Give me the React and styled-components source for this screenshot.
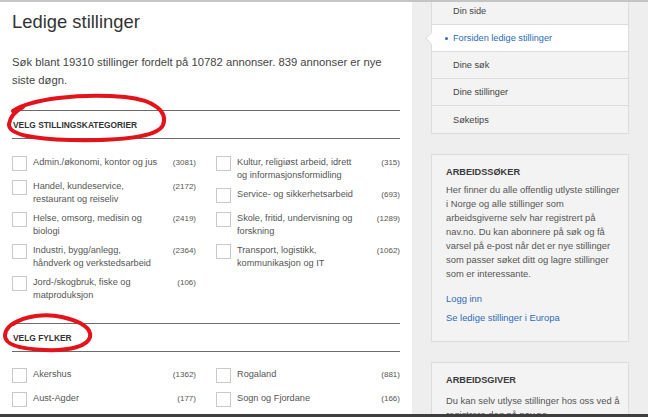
import styled, { createGlobalStyle } from "styled-components";

const GlobalStyle = createGlobalStyle`
  html, body {
    margin: 0;
    padding: 0;
    overflow: hidden;
  }
  body {
    font-family: "Liberation Sans", Arial, sans-serif;
    color: #444;
  }
`;

const Page = styled.div`
  position: relative;
  width: 648px;
  height: 417px;
  box-sizing: border-box;
  border-top: 2px solid #c4c4c4;
  display: flex;
  flex-direction: column;
`;

const Body = styled.div`
  flex: 1;
  min-height: 0;
  display: flex;
  overflow: hidden;
`;

const BottomBar = styled.div`
  height: 3px;
  background: #3e3e3e;
`;

const Main = styled.main`
  width: 412px;
  flex: none;
  box-sizing: border-box;
  background: #fff;
  padding: 8px 12px 0 12px;
`;

const Sidebar = styled.aside`
  flex: 1;
  background: #eeeeee;
  padding: 0 19px;
`;

const Title = styled.h1`
  margin: 0;
  font-size: 18.4px;
  font-weight: 400;
  line-height: 24px;
  color: #333;
`;

const Intro = styled.p`
  margin: 19px 0 0 0;
  font-size: 11.25px;
  line-height: 18px;
  color: #444;
`;

const SectionHead = styled.h2`
  margin: 21px 0 0 0;
  height: 27px;
  border-top: 1px solid #6b6b6b;
  border-bottom: 1px solid #6b6b6b;
  display: flex;
  align-items: center;
  padding-left: 1px;
  font-size: 8.4px;
  font-weight: 700;
  color: #333;
`;

const Columns = styled.div`
  display: grid;
  grid-template-columns: 1fr 1fr;
  column-gap: 20px;
  align-items: start;
  margin-top: ${(p) => p.$top}px;
`;

const Column = styled.div`
  display: flex;
  flex-direction: column;
  gap: 6px;
`;

const Option = styled.label`
  display: grid;
  grid-template-columns: 15px 1fr 31px;
  column-gap: 6px;
  align-items: start;
  min-height: 18px;
`;

const Box = styled.input.attrs({ type: "checkbox" })`
  appearance: none;
  margin: 0;
  width: 15px;
  height: 15px;
  box-sizing: border-box;
  border: 1px solid #c9c9c9;
  background: #fff;
`;

const OptionText = styled.span`
  font-size: 9.2px;
  line-height: 13px;
  color: #555;
`;

const Count = styled.span`
  font-size: 8px;
  line-height: 14px;
  color: #555;
  text-align: right;
`;

const Nav = styled.ul`
  margin: -4px 0 0 0;
  padding: 0;
  list-style: none;
  border: 1px solid #dcdcdc;
  border-top: none;
  background: #f3f3f3;
`;

const NavItem = styled.li`
  position: relative;
  height: 27px;
  box-sizing: border-box;
  display: flex;
  align-items: center;
  padding-left: 21px;
  border-bottom: 1px solid #dcdcdc;
  font-size: 9.2px;
  color: ${(p) => (p.$active ? "#2d6cb3" : "#444")};
  background: ${(p) => (p.$active ? "#fff" : "transparent")};

  &:last-child {
    border-bottom: none;
  }

  ${(p) =>
    p.$active &&
    `
    &::before {
      content: "";
      position: absolute;
      left: 13px;
      top: 12px;
      width: 3px;
      height: 3px;
      border-radius: 50%;
      background: #2d6cb3;
    }
    &::after {
      content: "";
      position: absolute;
      left: -5px;
      top: 9px;
      width: 8px;
      height: 8px;
      background: #fff;
      border-left: 1px solid #dcdcdc;
      border-bottom: 1px solid #dcdcdc;
      transform: rotate(45deg);
    }
  `}
`;

const Card = styled.section`
  margin-top: 20px;
  background: #f3f3f3;
  border: 1px solid #dcdcdc;
  padding: 11px 6px 16px 14px;
`;

const CardTitle = styled.h3`
  margin: 0;
  font-size: 9.2px;
  font-weight: 700;
  line-height: 12px;
  color: #3a3a3a;
`;

const CardText = styled.p`
  margin: ${(p) => p.$gap}px 0 0 0;
  font-size: 9.4px;
  line-height: 14px;
  color: #555;
`;

const CardLink = styled.a`
  display: block;
  margin-top: ${(p) => p.$gap}px;
  font-size: 9.4px;
  line-height: 14px;
  color: #2d6cb3;
  text-decoration: none;
`;

const Marks = styled.svg`
  position: absolute;
  left: 0;
  top: -2px;
  pointer-events: none;
`;

const categoriesLeft = [
  ["Admin./økonomi, kontor og jus", 3081],
  ["Handel, kundeservice, restaurant og reiseliv", 2172],
  ["Helse, omsorg, medisin og biologi", 2419],
  ["Industri, bygg/anlegg, håndverk og verkstedsarbeid", 2364],
  ["Jord-/skogbruk, fiske og matproduksjon", 106],
];

const categoriesRight = [
  ["Kultur, religiøst arbeid, idrett og informasjonsformidling", 315],
  ["Service- og sikkerhetsarbeid", 693],
  ["Skole, fritid, undervisning og forskning", 1289],
  ["Transport, logistikk, kommunikasjon og IT", 1062],
];

const countiesLeft = [
  ["Akershus", 1362],
  ["Aust-Agder", 177],
  ["Buskerud", 512],
];

const countiesRight = [
  ["Rogaland", 881],
  ["Sogn og Fjordane", 166],
  ["Telemark", 254],
];

const navItems = [
  "Din side",
  "Forsiden ledige stillinger",
  "Dine søk",
  "Dine stillinger",
  "Søketips",
];

const OptionList = ({ items }) => (
  <Column>
    {items.map(([name, count]) => (
      <Option key={name}>
        <Box />
        <OptionText>{name}</OptionText>
        <Count>({count})</Count>
      </Option>
    ))}
  </Column>
);

const App = () => {
  return (
    <Page>
      <GlobalStyle />
      <Body>
        <Main>
          <Title>Ledige stillinger</Title>
          <Intro>
            Søk blant 19310 stillinger fordelt på 10782 annonser. 839 annonser
            er nye siste døgn.
          </Intro>

          <SectionHead>VELG STILLINGSKATEGORIER</SectionHead>
          <Columns $top={17}>
            <OptionList items={categoriesLeft} />
            <OptionList items={categoriesRight} />
          </Columns>

          <SectionHead>VELG FYLKER</SectionHead>
          <Columns $top={16}>
            <OptionList items={countiesLeft} />
            <OptionList items={countiesRight} />
          </Columns>
        </Main>

        <Sidebar>
          <Nav>
            {navItems.map((item) => (
              <NavItem key={item} $active={item === "Forsiden ledige stillinger"}>
                {item}
              </NavItem>
            ))}
          </Nav>

          <Card>
            <CardTitle>ARBEIDSSØKER</CardTitle>
            <CardText $gap={5}>
              Her finner du alle offentlig utlyste stillinger i Norge og alle
              stillinger som arbeidsgiverne selv har registrert på nav.no. Du
              kan abonnere på søk og få varsel på e-post når det er nye
              stillinger som passer søket ditt og lagre stillinger som er
              interessante.
            </CardText>
            <CardLink href="#" $gap={11}>Logg inn</CardLink>
            <CardLink href="#" $gap={5}>Se ledige stillinger i Europa</CardLink>
          </Card>

          <Card>
            <CardTitle>ARBEIDSGIVER</CardTitle>
            <CardText $gap={8}>
              Du kan selv utlyse stillinger hos oss ved å registrere deg på
              nav.no.
            </CardText>
          </Card>
        </Sidebar>
      </Body>
      <BottomBar />

      {/* red hand-drawn marks over the section headings */}
      <Marks width="420" height="417" viewBox="0 0 420 417">
        <g fill="none" stroke="#e3131b" strokeWidth="4" strokeLinecap="round" strokeLinejoin="round">
          <path d="M 13 111 C 30 99, 80 93, 125 97 C 155 100, 168 112, 163 125 C 158 137, 120 141, 70 140 C 35 139, 8 135, 9 124 C 10 117, 14 112, 23 107" />
          <path d="M 13 324 C 25 316, 45 313, 62 317 C 80 321, 92 328, 90 337 C 88 346, 70 351, 45 350 C 22 349, 5 345, 5 336 C 5 329, 10 324, 20 320" />
        </g>
      </Marks>
    </Page>
  );
};

export default App;
